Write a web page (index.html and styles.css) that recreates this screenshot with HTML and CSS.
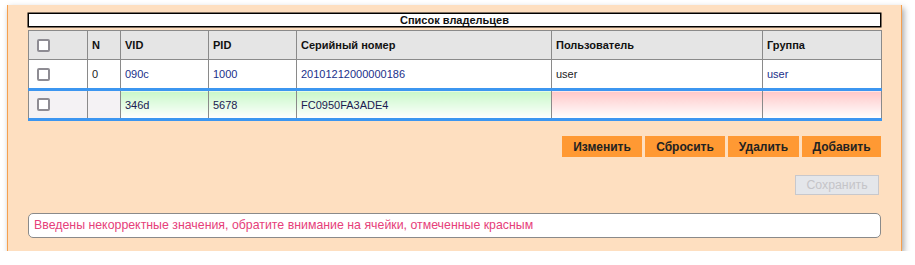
FILE: index.html
```html
<!DOCTYPE html>
<html>
<head>
<meta charset="utf-8">
<link rel="stylesheet" href="styles.css">
</head>
<body>
<div class="panel">
  <div class="title">Список владельцев</div>
  <table class="owners">
    <colgroup>
      <col class="c-check"><col class="c-n"><col class="c-vid"><col class="c-pid"><col class="c-serial"><col class="c-user"><col class="c-group">
    </colgroup>
    <thead>
      <tr>
        <th><span class="cb"></span></th>
        <th>N</th>
        <th>VID</th>
        <th>PID</th>
        <th>Серийный номер</th>
        <th>Пользователь</th>
        <th>Группа</th>
      </tr>
    </thead>
    <tbody>
      <tr class="row">
        <td><span class="cb"></span></td>
        <td class="num">0</td>
        <td class="blue">090c</td>
        <td class="blue">1000</td>
        <td class="blue">20101212000000186</td>
        <td class="black">user</td>
        <td class="blue">user</td>
      </tr>
      <tr class="row new">
        <td class="grey"><span class="cb"></span></td>
        <td class="grey"></td>
        <td class="ok">346d</td>
        <td class="ok">5678</td>
        <td class="ok">FC0950FA3ADE4</td>
        <td class="bad"></td>
        <td class="bad"></td>
      </tr>
    </tbody>
  </table>
  <div class="actions">
    <button class="btn">Изменить</button>
    <button class="btn">Сбросить</button>
    <button class="btn">Удалить</button>
    <button class="btn">Добавить</button>
  </div>
  <div class="save-row">
    <button class="save" disabled>Сохранить</button>
  </div>
  <div class="message">Введены некорректные значения, обратите внимание на ячейки, отмеченные красным</div>
</div>
</body>
</html>
```
FILE: styles.css
```css
html, body {
  margin: 0;
  padding: 0;
  background: #ffffff;
}
body {
  font-family: "Liberation Sans", Arial, sans-serif;
}
.panel {
  margin: 5px 0 0 7px;
  width: 895px;
  height: 246px;
  box-sizing: border-box;
  background: #fedfc0;
  border-left: 1px solid #f5a04f;
  border-right: 1px solid #f5a04f;
  padding: 8px 20px 0 20px;
  box-shadow: 2px 3px 6px rgba(0,0,0,0.35);
}
.title {
  height: 14px;
  box-sizing: border-box;
  border: 1px solid #000;
  box-shadow: 0 0 0 0.5px #000;
  background: #fff;
  text-align: center;
  font-weight: bold;
  font-size: 11px;
  line-height: 12px;
  color: #111;
}
.owners {
  margin-top: 3px;
  width: 853px;
  border-collapse: collapse;
  table-layout: fixed;
  font-size: 11px;
}
.c-check { width: 59px; }
.c-n { width: 33px; }
.c-vid { width: 88px; }
.c-pid { width: 88px; }
.c-serial { width: 255px; }
.c-user { width: 211px; }
.c-group { width: 119px; }
.owners th, .owners td {
  border: 1px solid #8a8a8a;
  padding: 0 0 0 4px;
  text-align: left;
  height: 28px;
  color: #222;
}
.owners th {
  background: #e5e5e5;
  font-weight: bold;
  color: #111;
}
.owners td { background: #fff; }
.owners th:first-child, .owners td:first-child { padding-left: 8px; }
.cb {
  display: block;
  width: 9px;
  height: 9px;
  border: 2px solid #8e8c93;
  border-radius: 2px;
  background: #fff;
}
.num { color: #5a1020; }
.owners td.blue { color: #1a2f8a; }
.owners td.black { color: #222; }
.row.new td {
  border-top: 3px solid #3c96f0;
  border-bottom: 3px solid #3c96f0;
  height: 27px;
}
.owners td.grey { background: #f4f2f4; }
.owners td.ok {
  background: linear-gradient(#c9f8c9, #ffffff);
  color: #1a2050;
}
.owners td.bad {
  background: linear-gradient(#ffc8c8, #ffffff);
}
.actions {
  display: flex;
  justify-content: flex-end;
  gap: 3px;
  margin-top: 15px;
}
.btn {
  height: 21px;
  border: 0;
  background: #ff9933;
  font-family: "Liberation Sans", Arial, sans-serif;
  font-weight: bold;
  font-size: 12px;
  color: #222;
  padding: 0;
  width: 80px;
}
.btn:nth-child(3) { width: 71px; }
.btn:nth-child(4) { width: 79px; }
.save-row {
  display: flex;
  justify-content: flex-end;
  margin-top: 18px;
  padding-right: 2px;
}
.save {
  width: 84px;
  height: 20px;
  box-sizing: border-box;
  background: #e4e6ea;
  border: 1px solid #c8c8cc;
  color: #c4c4c8;
  font-family: "Liberation Sans", Arial, sans-serif;
  font-size: 12.3px;
  padding: 0;
}
.message {
  margin-top: 18px;
  height: 25px;
  box-sizing: border-box;
  border: 1px solid #8a8a8a;
  border-radius: 5px;
  background: #fff;
  color: #e6407a;
  font-family: "Liberation Sans", Arial, sans-serif;
  font-size: 12.35px;
  line-height: 23px;
  padding-left: 5px;
}
```
